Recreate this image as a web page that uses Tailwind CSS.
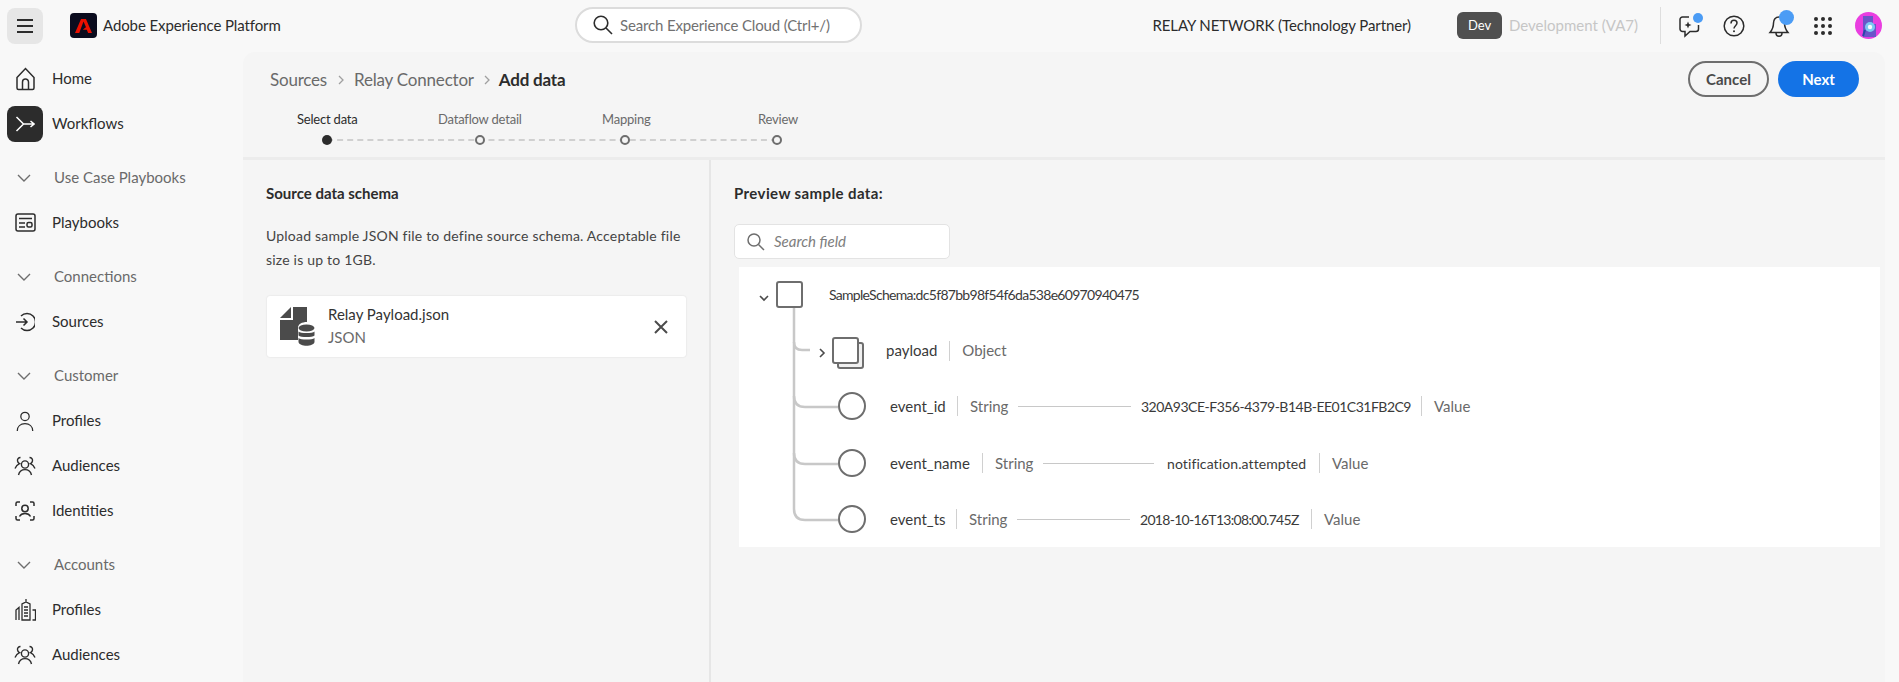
<!DOCTYPE html>
<html lang="en">
<head>
    <meta charset="UTF-8">
    <title>Adobe Experience Platform - Add data</title>
    <script src="https://cdn.jsdelivr.net/npm/@tailwindcss/browser@4"></script>
</head>
<body class="bg-[#f8f8f8] font-['Lato',sans-serif] text-[#2c2c2c] text-[15px] h-[682px] overflow-hidden">
    <svg class="hidden">
        <symbol id="chev-down" viewBox="0 0 16 16"><path d="M2 5l6 6 6-6" fill="none" stroke="#6e6e6e" stroke-width="1.4"/></symbol>
        <symbol id="audiences" viewBox="0 0 22 22" fill="none" stroke="#2c2c2c" stroke-width="1.4">
            <circle cx="11" cy="9.5" r="3.6"/><path d="M4.5 20c.8-3.6 3.4-5.4 6.5-5.4s5.700 1.800 6.500 5.400"/>
            <path d="M6.500 2.500C4.500 2.500 3.300 4 3.500 5.800c.2 1.300 1 2.300 2 2.800C3.500 9.500 2 11 1 13.500"/>
            <path d="M15.500 2.500c2 0 3.200 1.500 3 3.300-.2 1.300-1 2.300-2 2.800 2 .9 3.500 2.400 4.500 4.900"/>
        </symbol>
        <symbol id="profile" viewBox="0 0 22 24" fill="none" stroke="#2c2c2c" stroke-width="1.4">
            <circle cx="11" cy="7" r="4.600"/><path d="M2.500 23c0-5 3.600-8 8.500-8s8.500 3 8.500 8"/>
        </symbol>
    </svg>

    <!-- Top bar -->
    <header class="h-[52px] flex items-center relative">
        <div class="w-[36px] h-[36px] ml-[7px] -mt-[1px] rounded-lg bg-[#e6e6e6] flex items-center justify-center">
            <svg width="16" height="16" viewBox="0 0 16 16"><path d="M0 2h16M0 8h16M0 14h16" stroke="#2c2c2c" stroke-width="2"/></svg>
        </div>
        <div class="w-[27px] h-[25px] ml-[27px] -mt-[1px] rounded-[4px] bg-[#0b0c1e] flex items-center justify-center">
            <svg width="17" height="16" viewBox="0 0 24 22"><path fill="#eb1000" d="M8.500 1h7L24 21h-5.500l-1.800-4.600H11l3.700-3.400h1L12 4.500 6 21H0z"/></svg>
        </div>
        <span class="ml-[6px] -mt-[1px] tracking-[-0.1px]">Adobe Experience Platform</span>
        <div class="absolute left-[575px] top-[7px] w-[287px] h-[36px] rounded-full bg-white border-2 border-[#dcdcdc] flex items-center pl-[16px]">
            <svg width="20" height="20" viewBox="0 0 20 20" fill="none" stroke="#2c2c2c" stroke-width="1.600"><circle cx="8" cy="8" r="6.800"/><path d="M13 13l6 6"/></svg>
            <span class="ml-[7px] text-[#717171] tracking-[-0.15px]">Search Experience Cloud (Ctrl+/)</span>
        </div>
        <div class="ml-auto -mt-[1px] flex items-center">
            <span class="tracking-[-0.1px]">RELAY NETWORK (Technology Partner)</span>
            <span class="ml-[46px] w-[45px] h-[27px] rounded-md bg-[#505050] text-white text-[13px] flex items-center justify-center">Dev</span>
            <span class="ml-[7px] text-[#c6c6c6] w-[129px] whitespace-nowrap">Development (VA7)</span>
            <span class="ml-[22px] w-[1px] h-[37px] bg-[#dedede]"></span>
            <span class="relative ml-[18px] w-[22px] h-[24px]">
                <svg width="22" height="24" viewBox="0 0 22 24" fill="none" stroke="#2c2c2c" stroke-width="1.500"><path d="M10 3H3.500A2.500 2.500 0 0 0 1 5.500V15a2.500 2.500 0 0 0 2.500 2.500H6V22l5-4.500h6a2.500 2.500 0 0 0 2.500-2.500V11"/><path d="M9 7.500l1 2.500 2.500 1-2.500 1-1 2.500-1-2.500-2.500-1 2.500-1z" fill="#2c2c2c" stroke="none"/></svg>
                <span class="absolute left-[14px] -top-[1px] w-[10px] h-[10px] rounded-full bg-[#4b9cf5]"></span>
            </span>
            <svg class="ml-[22px]" width="22" height="22" viewBox="0 0 22 22" fill="none" stroke="#2c2c2c" stroke-width="1.500"><circle cx="11" cy="11" r="9.800"/><path d="M8 8.500c0-2 1.300-3.200 3-3.200s3 1.100 3 2.800c0 2.600-3 2.700-3 5.400"/><circle cx="11" cy="16.300" r="1" fill="#2c2c2c" stroke="none"/></svg>
            <span class="relative ml-[23px] w-[22px] h-[24px]">
                <svg width="22" height="24" viewBox="0 0 22 24" fill="none" stroke="#2c2c2c" stroke-width="1.500"><path d="M11 3c-3.600 0-5.500 2.700-5.500 6 0 4.500-1 6.500-3.500 9.500h18c-2.500-3-3.500-5-3.500-9.500 0-3.300-1.900-6-5.500-6z"/><path d="M8 19c0 2 1.300 3.300 3 3.300s3-1.300 3-3.300"/></svg>
                <span class="absolute left-[11px] -top-[4px] w-[15px] h-[15px] rounded-full bg-[#4b9cf5]"></span>
            </span>
            <svg class="ml-[24px]" width="18" height="18" viewBox="0 0 18 18" fill="#2c2c2c"><circle cx="2" cy="2" r="2"/><circle cx="9" cy="2" r="2"/><circle cx="16" cy="2" r="2"/><circle cx="2" cy="9" r="2"/><circle cx="9" cy="9" r="2"/><circle cx="16" cy="9" r="2"/><circle cx="2" cy="16" r="2"/><circle cx="9" cy="16" r="2"/><circle cx="16" cy="16" r="2"/></svg>
            <svg class="ml-[23px] mr-[17px]" width="27" height="27" viewBox="0 0 27 27"><circle cx="13.500" cy="13.500" r="13.500" fill="#e93ee0"/><path d="M8 4h10v8h3v13H8z" fill="#6a55c9"/><circle cx="15" cy="15" r="5" fill="#7cc7f2"/><circle cx="15" cy="15" r="2.200" fill="#f4fbff"/><path d="M10 18l-2 6" stroke="#2747a8" stroke-width="2"/></svg>
        </div>
    </header>

    <div class="flex">
        <!-- Sidebar -->
        <nav class="w-[243px] shrink-0 pt-[4px]">
            <a class="h-[45px] flex items-center">
                <svg class="ml-[16px]" width="19" height="24" viewBox="0 0 19 24" fill="none" stroke="#2c2c2c" stroke-width="1.500"><path d="M1 10.500L9.500 1.500l8.500 9V21a1.500 1.500 0 0 1-1.500 1.500h-14A1.500 1.500 0 0 1 1 21z"/><path d="M6.500 22.500V15a3 3 0 0 1 6 0v7.500"/></svg>
                <span class="ml-[17px]">Home</span>
            </a>
            <a class="h-[45px] flex items-center">
                <span class="ml-[7px] w-[36px] h-[36px] rounded-lg bg-[#2c2c2c] flex items-center justify-center">
                    <svg width="20" height="20" viewBox="0 0 20 20" fill="none" stroke="#fff" stroke-width="1.500"><path d="M1.500 3l7 7-7 7M8.500 10H19M15.500 7l3.500 3-3.500 3"/></svg>
                </span>
                <span class="ml-[9px]">Workflows</span>
            </a>
            <div class="h-[45px] mt-[9px] flex items-center text-[#6a6a6a]">
                <svg class="ml-[16px]" width="16" height="16"><use href="#chev-down"/></svg>
                <span class="ml-[22px]">Use Case Playbooks</span>
            </div>
            <a class="h-[45px] flex items-center">
                <svg class="ml-[15px]" width="21" height="19" viewBox="0 0 21 19" fill="none" stroke="#2c2c2c" stroke-width="1.500"><rect x="1" y="1" width="19" height="17" rx="2"/><path d="M4 5.500h13M4 10h6M4 14h6"/><rect x="12" y="9.500" width="5" height="4.500" rx="1.500"/></svg>
                <span class="ml-[16px]">Playbooks</span>
            </a>
            <div class="h-[45px] mt-[9px] flex items-center text-[#6a6a6a]">
                <svg class="ml-[16px]" width="16" height="16"><use href="#chev-down"/></svg>
                <span class="ml-[22px]">Connections</span>
            </div>
            <a class="h-[45px] flex items-center">
                <svg class="ml-[15px]" width="20" height="20" viewBox="0 0 20 20" fill="none" stroke="#2c2c2c" stroke-width="1.500"><path d="M6 4a8.500 8.500 0 1 1 0 12"/><path d="M1 10h11M8.500 6.500L12 10l-3.500 3.500"/></svg>
                <span class="ml-[17px]">Sources</span>
            </a>
            <div class="h-[45px] mt-[9px] flex items-center text-[#6a6a6a]">
                <svg class="ml-[16px]" width="16" height="16"><use href="#chev-down"/></svg>
                <span class="ml-[22px]">Customer</span>
            </div>
            <a class="h-[45px] flex items-center">
                <svg class="ml-[15px]" width="20" height="22"><use href="#profile"/></svg>
                <span class="ml-[17px]">Profiles</span>
            </a>
            <a class="h-[45px] flex items-center">
                <svg class="ml-[14px]" width="22" height="22"><use href="#audiences"/></svg>
                <span class="ml-[16px]">Audiences</span>
            </a>
            <a class="h-[45px] flex items-center">
                <svg class="ml-[15px]" width="20" height="20" viewBox="0 0 20 20" fill="none" stroke="#2c2c2c" stroke-width="1.500"><path d="M1 5V2.500A1.500 1.500 0 0 1 2.500 1H5M15 1h2.500A1.500 1.500 0 0 1 19 2.500V5M1 15v2.500A1.500 1.500 0 0 0 2.500 19H5M15 19h2.500a1.500 1.500 0 0 0 1.500-1.500V15"/><circle cx="10" cy="7.500" r="3.200"/><path d="M4.500 15.500c1-2 3-3 5.500-3s4.500 1 5.500 3"/></svg>
                <span class="ml-[17px]">Identities</span>
            </a>
            <div class="h-[45px] mt-[9px] flex items-center text-[#6a6a6a]">
                <svg class="ml-[16px]" width="16" height="16"><use href="#chev-down"/></svg>
                <span class="ml-[22px]">Accounts</span>
            </div>
            <a class="h-[45px] flex items-center">
                <svg class="ml-[15px]" width="21" height="22" viewBox="0 0 21 22" fill="none" stroke="#2c2c2c" stroke-width="1.300"><path d="M7 21V5l4-2 4 2v16zM11 3V0M1 21V11l3-2.500V21M17.500 11H20.500V21H17.500M9 8h4M9 11h4M9 14h4M9 17h4"/></svg>
                <span class="ml-[16px]">Profiles</span>
            </a>
            <a class="h-[45px] flex items-center">
                <svg class="ml-[14px]" width="22" height="22"><use href="#audiences"/></svg>
                <span class="ml-[16px]">Audiences</span>
            </a>
        </nav>

        <!-- Main panel -->
        <main class="w-[1642px] h-[630px] bg-[#f5f5f5] rounded-tl-xl rounded-tr-xl">
            <div class="h-[108px] relative border-b-[3px] border-[#ececec]">
                <div class="flex items-center pl-[27px] pt-[16px] text-[17px] tracking-[-0.2px] text-[#6a6a6a] leading-[24px]">
                    <span>Sources</span>
                    <svg class="ml-[9px] mr-[8px]" width="10" height="10" viewBox="0 0 10 10" fill="none" stroke="#a0a0a0" stroke-width="1.300"><path d="M3 1l4 4-4 4"/></svg>
                    <span>Relay Connector</span>
                    <svg class="ml-[8px] mr-[7px]" width="10" height="10" viewBox="0 0 10 10" fill="none" stroke="#a0a0a0" stroke-width="1.300"><path d="M3 1l4 4-4 4"/></svg>
                    <span class="font-bold text-[#2c2c2c]">Add data</span>
                </div>
                <!-- Stepper -->
                <div class="absolute left-[84px] top-[58px] h-[36px] w-[450px]">
                    <div class="absolute left-0 right-0 top-[29px] border-t-2 border-dashed border-[#d0d0d0]"></div>
                    <div class="absolute left-0 top-[25px] w-[10px] h-[10px] -ml-[5px] rounded-full bg-[#2c2c2c]"></div>
                    <div class="absolute left-[153px] top-[25px] w-[10px] h-[10px] -ml-[5px] rounded-full bg-[#f5f5f5] border-2 border-[#6e6e6e]"></div>
                    <div class="absolute left-[298px] top-[25px] w-[10px] h-[10px] -ml-[5px] rounded-full bg-[#f5f5f5] border-2 border-[#6e6e6e]"></div>
                    <div class="absolute left-[450px] top-[25px] w-[10px] h-[10px] -ml-[5px] rounded-full bg-[#f5f5f5] border-2 border-[#6e6e6e]"></div>
                    <span class="absolute left-[-30px] top-0 text-[13px] tracking-[-0.2px] whitespace-nowrap">Select data</span>
                    <span class="absolute left-[111px] top-0 text-[13px] tracking-[-0.2px] text-[#6a6a6a] whitespace-nowrap">Dataflow detail</span>
                    <span class="absolute left-[275px] top-0 text-[13px] tracking-[-0.2px] text-[#6a6a6a] whitespace-nowrap">Mapping</span>
                    <span class="absolute left-[431px] top-0 text-[13px] tracking-[-0.2px] text-[#6a6a6a] whitespace-nowrap">Review</span>
                </div>
                <div class="absolute right-[26px] top-[9px] flex gap-[9px]">
                    <button class="w-[81px] h-[36px] rounded-full border-2 border-[#6e6e6e] text-[#4a4a4a] font-bold">Cancel</button>
                    <button class="w-[81px] h-[36px] rounded-full bg-[#1473e6] text-white font-bold">Next</button>
                </div>
            </div>

            <div class="flex h-[522px]">
                <!-- Left column -->
                <section class="w-[468px] shrink-0 border-r-2 border-[#e6e6e6] pl-[23px] pt-[23px]">
                    <h2 class="font-bold leading-[20px]">Source data schema</h2>
                    <p class="mt-[21px] text-[14px] whitespace-nowrap text-[#444] leading-[24px] tracking-[0.2px]">Upload sample JSON file to define source schema. Acceptable file<br>size is up to 1GB.</p>
                    <div class="mt-[24px] ml-[1px] w-[419px] h-[61px] bg-white rounded-[3px] shadow-[0_0_2px_rgba(0,0,0,0.12)] flex items-center">
                        <svg class="ml-[13px]" width="35" height="39" viewBox="0 0 35 39" fill="#4b4b4b"><path d="M11 0v11H0z"/><path d="M13 0h14v15c-5 0-9 2-9 6v12H0V13h13z"/><ellipse cx="26.500" cy="21" rx="8" ry="3.500"/><path d="M18.500 24.500c2 2 14 2 16 0v4c-2 2-14 2-16 0z"/><path d="M18.500 31c2 2 14 2 16 0v4c-1 5-15 5-16 0z"/></svg>
                        <div class="ml-[13px] -mt-[2px] leading-[23px]">
                            <div class="text-[#333]">Relay Payload.json</div>
                            <div class="text-[#6a6a6a]">JSON</div>
                        </div>
                        <svg class="ml-auto mr-[18px]" width="14" height="14" viewBox="0 0 14 14" stroke="#4b4b4b" stroke-width="2"><path d="M1 1l12 12M13 1L1 13"/></svg>
                    </div>
                </section>

                <!-- Right column -->
                <section class="flex-1 pl-[23px] pt-[23px] relative">
                    <h2 class="font-bold leading-[20px] tracking-[0.4px]">Preview sample data:</h2>
                    <div class="mt-[21px] w-[216px] h-[35px] bg-white border border-[#e3e3e3] rounded-[5px] flex items-center pl-[12px]">
                        <svg width="18" height="18" viewBox="0 0 18 18" fill="none" stroke="#6e6e6e" stroke-width="1.500"><circle cx="7" cy="7" r="6"/><path d="M11.500 11.500l5.500 5.500"/></svg>
                        <span class="ml-[9px] italic text-[#7d7d7d]">Search field</span>
                    </div>
                    <!-- Tree -->
                    <div class="relative mt-[8px] ml-[5px] w-[1141px] h-[280px] bg-white pl-[37px] pt-[14px] text-[14px] text-[#3a3a3a]">
                        <svg class="absolute left-0 top-0" width="110" height="280" viewBox="0 0 110 280" fill="none" stroke="#c8c8c8" stroke-width="2.500">
                            <path d="M55 41V75q0 8 8 8h8"/>
                            <path d="M55 75V129q0 11 11 11h33"/>
                            <path d="M55 129V186q0 11 11 11h33"/>
                            <path d="M55 186V242q0 11 11 11h33"/>
                        </svg>
                        <svg class="absolute left-[20px] top-[26px]" width="10" height="10" viewBox="0 0 10 10" fill="none" stroke="#4b4b4b" stroke-width="1.600"><path d="M1 3l4 4 4-4"/></svg>
                        <div class="flex items-center h-[27px] relative">
                            <span class="w-[27px] h-[27px] rounded-[3px] border-2 border-[#6e6e6e] bg-white"></span>
                            <span class="ml-[26px] tracking-[-0.7px] whitespace-nowrap">SampleSchema:dc5f87bb98f54f6da538e60970940475</span>
                        </div>
                        <div class="flex items-center h-[27px] mt-[29px] ml-[56px] relative text-[15px]">
                            <svg class="absolute -left-[14px] top-[11px]" width="8" height="10" viewBox="0 0 8 10" fill="none" stroke="#4b4b4b" stroke-width="1.600"><path d="M2 1l4 4-4 4"/></svg>
                            <span class="relative w-[27px] h-[27px] rounded-[3px] border-2 border-[#6e6e6e] bg-white shadow-[5px_5px_0_-2px_#f0f0f0,5px_5px_0_0_#6e6e6e]"></span>
                            <span class="ml-[27px] flex items-center">payload<i class="mx-[12px] w-px h-[20px] bg-[#d0d0d0]"></i><span class="text-[#6a6a6a]">Object</span></span>
                        </div>
                        <div class="flex items-center h-[28px] mt-[28px] ml-[62px] relative">
                            <span class="w-[28px] h-[28px] rounded-full border-2 border-[#6e6e6e] bg-white"></span>
                            <span class="ml-[24px] w-[55px] text-[15px]">event_id</span><i class="mx-[12px] w-px h-[20px] bg-[#d0d0d0]"></i><span class="w-[37px] text-[15px] text-[#6a6a6a]">String</span>
                            <i class="ml-[11px] w-[113px] h-px bg-[#c8c8c8]"></i>
                            <span class="ml-[10px] w-[268px] whitespace-nowrap tracking-[-0.5px]">320A93CE-F356-4379-B14B-EE01C31FB2C9</span><i class="mx-[12px] w-px h-[20px] bg-[#d0d0d0]"></i><span class="text-[15px] text-[#6a6a6a]">Value</span>
                        </div>
                        <div class="flex items-center h-[28px] mt-[29px] ml-[62px] relative">
                            <span class="w-[28px] h-[28px] rounded-full border-2 border-[#6e6e6e] bg-white"></span>
                            <span class="ml-[24px] w-[80px] text-[15px]">event_name</span><i class="mx-[12px] w-px h-[20px] bg-[#d0d0d0]"></i><span class="w-[37px] text-[15px] text-[#6a6a6a]">String</span>
                            <i class="ml-[11px] w-[111px] h-px bg-[#c8c8c8]"></i>
                            <span class="ml-[13px] w-[140px] whitespace-nowrap tracking-[0.1px]">notification.attempted</span><i class="mx-[12px] w-px h-[20px] bg-[#d0d0d0]"></i><span class="text-[15px] text-[#6a6a6a]">Value</span>
                        </div>
                        <div class="flex items-center h-[28px] mt-[28px] ml-[62px] relative">
                            <span class="w-[28px] h-[28px] rounded-full border-2 border-[#6e6e6e] bg-white"></span>
                            <span class="ml-[24px] w-[54px] text-[15px]">event_ts</span><i class="mx-[12px] w-px h-[20px] bg-[#d0d0d0]"></i><span class="w-[37px] text-[15px] text-[#6a6a6a]">String</span>
                            <i class="ml-[11px] w-[113px] h-px bg-[#c8c8c8]"></i>
                            <span class="ml-[10px] w-[159px] whitespace-nowrap tracking-[-0.7px]">2018-10-16T13:08:00.745Z</span><i class="mx-[12px] w-px h-[20px] bg-[#d0d0d0]"></i><span class="text-[15px] text-[#6a6a6a]">Value</span>
                        </div>
                    </div>
                </section>
            </div>
        </main>
    </div>
</body>
</html>
